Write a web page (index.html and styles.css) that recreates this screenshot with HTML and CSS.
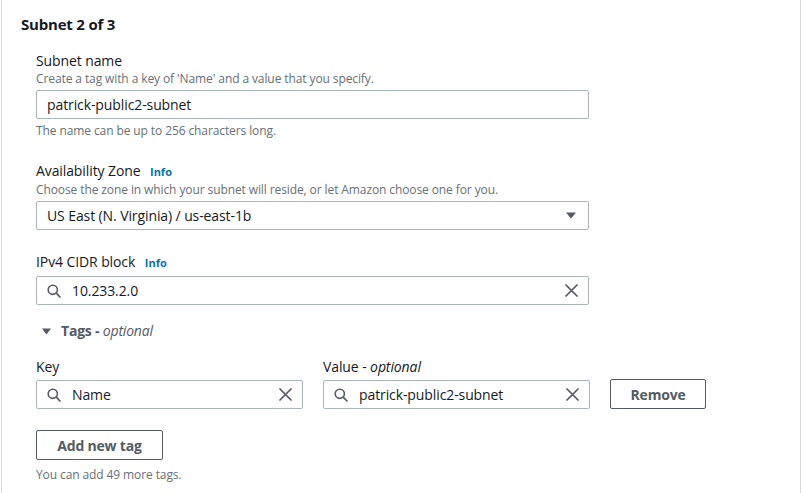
FILE: index.html
```html
<!DOCTYPE html>
<html>
<head>
<meta charset="utf-8">
<link rel="stylesheet" href="styles.css">
</head>
<body>
<div class="card">
  <h2 class="title">Subnet 2 of 3</h2>
  <div class="body">
    <div class="field">
      <div class="label">Subnet name</div>
      <div class="desc">Create a tag with a key of 'Name' and a value that you specify.</div>
      <div class="input"><span class="val">patrick-public2-subnet</span></div>
      <div class="hint">The name can be up to 256 characters long.</div>
    </div>
    <div class="field">
      <div class="label">Availability Zone <span class="info">Info</span></div>
      <div class="desc">Choose the zone in which your subnet will reside, or let Amazon choose one for you.</div>
      <div class="input select"><span class="val">US East (N. Virginia) / us-east-1b</span>
        <svg class="caret" width="10" height="7" viewBox="0 0 10 7"><path d="M0 0.5h10L5 6.5z" fill="#545b64"/></svg>
      </div>
    </div>
    <div class="field">
      <div class="label plain">IPv4 CIDR block <span class="info">Info</span></div>
      <div class="input search">
        <svg class="mag" width="14" height="14" viewBox="0 0 14 14"><circle cx="5.8" cy="5.8" r="4.6" fill="none" stroke="#545b64" stroke-width="1.6"/><path d="M9.2 9.2L13 13" stroke="#545b64" stroke-width="1.7" stroke-linecap="round"/></svg>
        <span class="val">10.233.2.0</span>
        <svg class="clear" width="13" height="13" viewBox="0 0 13 13"><path d="M1 1l11 11M12 1L1 12" stroke="#545b64" stroke-width="1.7" stroke-linecap="round"/></svg>
      </div>
    </div>
    <div class="tags-head">
      <svg width="9" height="7" viewBox="0 0 9 7"><path d="M0 0.5h9L4.5 6.5z" fill="#545b64"/></svg>
      <span class="tags-title">Tags - <i>optional</i></span>
    </div>
    <div class="tag-row">
      <div class="tag-col">
        <div class="label">Key</div>
        <div class="input search">
          <svg class="mag" width="14" height="14" viewBox="0 0 14 14"><circle cx="5.8" cy="5.8" r="4.6" fill="none" stroke="#545b64" stroke-width="1.6"/><path d="M9.2 9.2L13 13" stroke="#545b64" stroke-width="1.7" stroke-linecap="round"/></svg>
          <span class="val">Name</span>
          <svg class="clear" width="13" height="13" viewBox="0 0 13 13"><path d="M1 1l11 11M12 1L1 12" stroke="#545b64" stroke-width="1.7" stroke-linecap="round"/></svg>
        </div>
      </div>
      <div class="tag-col">
        <div class="label">Value - <i>optional</i></div>
        <div class="input search">
          <svg class="mag" width="14" height="14" viewBox="0 0 14 14"><circle cx="5.8" cy="5.8" r="4.6" fill="none" stroke="#545b64" stroke-width="1.6"/><path d="M9.2 9.2L13 13" stroke="#545b64" stroke-width="1.7" stroke-linecap="round"/></svg>
          <span class="val">patrick-public2-subnet</span>
          <svg class="clear" width="13" height="13" viewBox="0 0 13 13"><path d="M1 1l11 11M12 1L1 12" stroke="#545b64" stroke-width="1.7" stroke-linecap="round"/></svg>
        </div>
      </div>
      <button class="btn remove">Remove</button>
    </div>
    <button class="btn add">Add new tag</button>
    <div class="hint small">You can add 49 more tags.</div>
  </div>
</div>
</body>
</html>
```
FILE: styles.css
```css
html, body { margin: 0; padding: 0; background: #fff; }
body {
  font-family: "Open Sans", "Liberation Sans", sans-serif;
  color: #16191f;
  width: 803px;
  height: 493px;
  overflow: hidden;
}
.card {
  margin-left: 1px;
  width: 800px;
  border-left: 1px solid #d5dbdb;
  border-right: 1px solid #d5dbdb;
  height: 493px;
  box-sizing: border-box;
  padding: 14px 0 0 19px;
}
.title {
  margin: 0;
  font-size: 15px;
  font-weight: 700;
  line-height: 20px;
  letter-spacing: -0.2px;
}
.body {
  padding-left: 15px;
  padding-top: 17px;
  width: 553px;
}
.field { margin-bottom: 22px; }
.label {
  font-size: 14px;
  line-height: 20px;
  letter-spacing: -0.1px;
}
.label.plain { margin-bottom: 3px; }
.info {
  color: #0073bb;
  font-weight: 700;
  font-size: 11px;
  margin-left: 6px;
  letter-spacing: 0;
}
.desc, .hint {
  font-size: 12px;
  color: #687078;
  line-height: 16px;
  letter-spacing: -0.1px;
}
.desc { margin-bottom: 3px; }
.hint { margin-top: 4px; }
.input {
  height: 29px;
  box-sizing: border-box;
  border: 1px solid #aab7b8;
  border-radius: 2px;
  display: flex;
  align-items: center;
  padding: 0 10px;
  font-size: 14px;
  letter-spacing: -0.1px;
  margin-top: 3px;
}
.input .val { flex: 1; white-space: nowrap; }
.select { padding-right: 12px; }
.search { padding: 0 10px 0 10px; }
.search .mag { margin-right: 11px; }
.tags-head {
  display: flex;
  align-items: center;
  gap: 10px;
  margin-top: -6px;
  padding-left: 6px;
  font-size: 14px;
  line-height: 20px;
  font-weight: 700;
  color: #545b64;
  letter-spacing: -0.2px;
}
.tags-title i { font-weight: 400; }
.tag-row {
  display: flex;
  align-items: flex-end;
  gap: 20px;
  margin-top: 16px;
  width: 670px;
}
.tag-col { width: 267px; }
.tag-col .label { margin-bottom: 1px; }
.btn {
  font-family: inherit;
  background: #fff;
  border: 1px solid #545b64;
  border-radius: 2px;
  color: #545b64;
  font-weight: 700;
  font-size: 14px;
  letter-spacing: -0.2px;
  height: 30px;
  padding: 0;
}
.remove { width: 96px; }
.add { width: 127px; margin-top: 21px; display: block; }
.small { margin-top: 7px; }
```
